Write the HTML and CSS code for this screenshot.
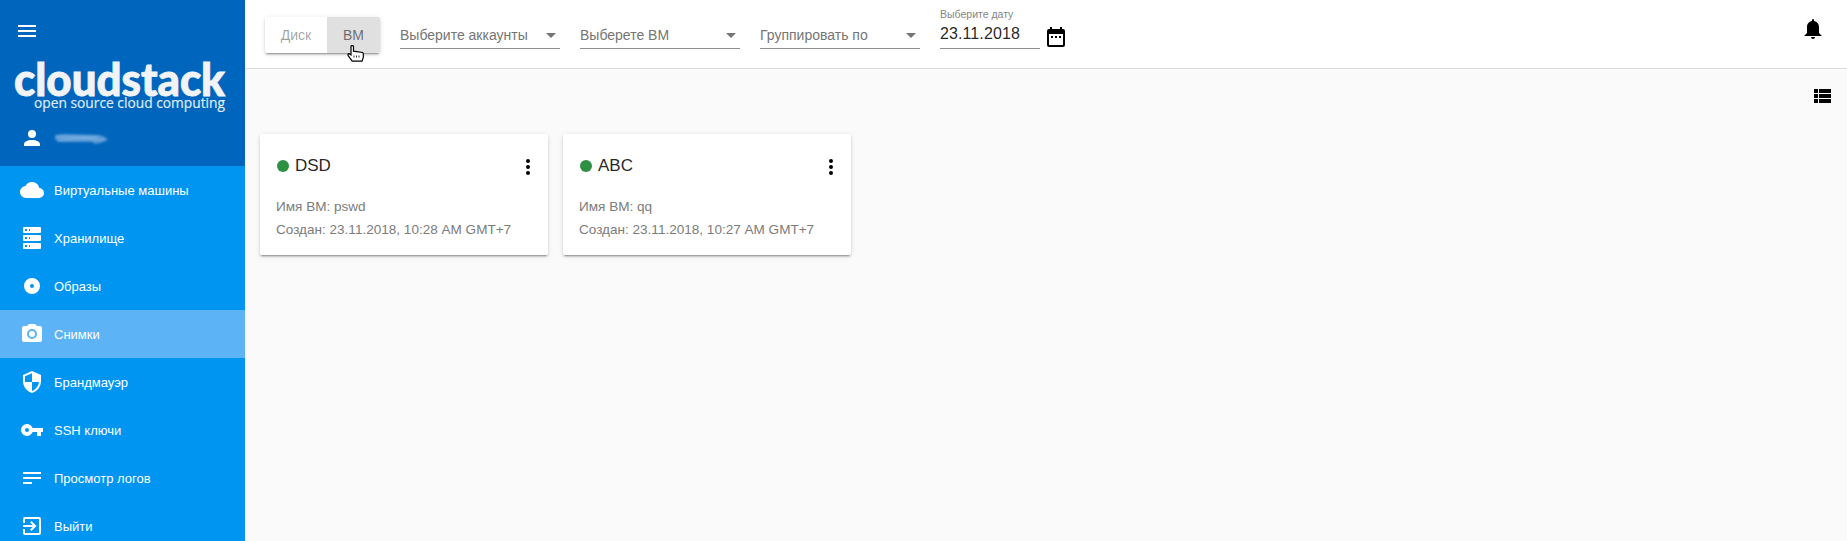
FILE: index.html
```html
<!DOCTYPE html>
<html lang="ru">
<head>
<meta charset="utf-8">
<title>CloudStack</title>
<link rel="stylesheet" href="styles.css">
</head>
<body>
<div class="app">
  <aside class="sidebar">
    <header class="sidebar-head">
      <svg class="icon burger" viewBox="0 0 24 24"><path d="M3 6h18v2H3V6m0 5h18v2H3v-2m0 5h18v2H3v-2z"/></svg>
      <svg class="logo" viewBox="0 0 245 56">
        <text class="logo-name" x="14" y="39.500" textLength="211" lengthAdjust="spacingAndGlyphs">cloudstack</text>
        <text class="logo-tag" x="34" y="52" textLength="191" lengthAdjust="spacingAndGlyphs">open source cloud computing</text>
      </svg>
      <div class="user">
        <svg class="icon" viewBox="0 0 24 24"><path d="M12 4a4 4 0 0 1 4 4 4 4 0 0 1-4 4 4 4 0 0 1-4-4 4 4 0 0 1 4-4m0 10c4.42 0 8 1.79 8 4v2H4v-2c0-2.21 3.58-4 8-4z"/></svg>
        <svg class="user-name" viewBox="0 0 56 14"><path class="smear" d="M1 4L10 3 46 4 51 6 54 9 46 12 41 13 38 11 4 11 1 8z"/><path class="streak" d="M3 5.500L44 6M5 9L30 7.500 50 9"/></svg>
      </div>
    </header>
    <nav class="menu">
      <a class="item"><svg class="icon" viewBox="0 0 24 24"><path d="M19.35 10.03C18.67 6.59 15.64 4 12 4 9.11 4 6.6 5.64 5.35 8.03 2.34 8.36 0 10.9 0 14a6 6 0 0 0 6 6h13a5 5 0 0 0 5-5c0-2.64-2.05-4.78-4.65-4.97z"/></svg>Виртуальные машины</a>
      <a class="item"><svg class="icon" viewBox="0 0 24 24"><path d="M4 1h16a1 1 0 0 1 1 1v4a1 1 0 0 1-1 1H4a1 1 0 0 1-1-1V2a1 1 0 0 1 1-1m0 8h16a1 1 0 0 1 1 1v4a1 1 0 0 1-1 1H4a1 1 0 0 1-1-1v-4a1 1 0 0 1 1-1m0 8h16a1 1 0 0 1 1 1v4a1 1 0 0 1-1 1H4a1 1 0 0 1-1-1v-4a1 1 0 0 1 1-1M9 5h1V3H9v2m0 8h1v-2H9v2m0 8h1v-2H9v2M5 3v2h2V3H5m0 8v2h2v-2H5m0 8v2h2v-2H5z"/></svg>Хранилище</a>
      <a class="item"><svg class="icon disc" viewBox="0 0 24 24"><path d="M12 10a2 2 0 0 0-2 2 2 2 0 0 0 2 2 2 2 0 0 0 2-2 2 2 0 0 0-2-2m0-6a8 8 0 0 0-8 8 8 8 0 0 0 8 8 8 8 0 0 0 8-8 8 8 0 0 0-8-8z"/></svg>Образы</a>
      <a class="item active"><svg class="icon" viewBox="0 0 24 24"><path d="M4 4h3l2-2h6l2 2h3a2 2 0 0 1 2 2v12a2 2 0 0 1-2 2H4a2 2 0 0 1-2-2V6a2 2 0 0 1 2-2m8 3a5 5 0 0 0-5 5 5 5 0 0 0 5 5 5 5 0 0 0 5-5 5 5 0 0 0-5-5m0 2a3 3 0 0 1 3 3 3 3 0 0 1-3 3 3 3 0 0 1-3-3 3 3 0 0 1 3-3z"/></svg>Снимки</a>
      <a class="item"><svg class="icon" viewBox="0 0 24 24"><path d="M12 12h7c-.53 4.11-3.28 7.78-7 8.92V12H5V6.3l7-3.11M12 1L3 5v6c0 5.55 3.84 10.73 9 12 5.16-1.27 9-6.45 9-12V5l-9-4z"/></svg>Брандмауэр</a>
      <a class="item"><svg class="icon" viewBox="0 0 24 24"><path d="M7 14a2 2 0 0 1-2-2 2 2 0 0 1 2-2 2 2 0 0 1 2 2 2 2 0 0 1-2 2m5.65-4C11.83 7.67 9.61 6 7 6a6 6 0 0 0-6 6 6 6 0 0 0 6 6c2.61 0 4.83-1.67 5.65-4H17v4h4v-4h2v-4H12.65z"/></svg>SSH ключи</a>
      <a class="item"><svg class="icon" viewBox="0 0 24 24"><path d="M3 6h18v2H3V6m0 5h18v2H3v-2m0 5h9v2H3v-2z"/></svg>Просмотр логов</a>
      <a class="item"><svg class="icon" viewBox="0 0 24 24"><path d="M19 3H5a2 2 0 0 0-2 2v4h2V5h14v14H5v-4H3v4a2 2 0 0 0 2 2h14a2 2 0 0 0 2-2V5a2 2 0 0 0-2-2m-8.92 12.58L11.5 17l5-5-5-5-1.42 1.41L12.67 11H3v2h9.67l-2.59 2.58z"/></svg>Выйти</a>
    </nav>
  </aside>
  <main class="main">
    <header class="topbar">
      <div class="toggle">
        <span class="toggle-btn">Диск</span>
        <span class="toggle-btn checked">ВМ</span>
        <svg class="cursor" viewBox="0 0 17 17"><path d="M4 1.5C4 .2 6.500.2 6.500 1.500V6.200l9 1.300c.6.300.8.800.8 1.300v3.700l-1.300 3.700H5.200L1.500 11.200c-.8-1.300-.8-2.500.5-2.500l2 1.300z"/><path class="knuckles" d="M7 10.500v2M9.500 10.500v2M12 10.500v2"/></svg>
      </div>
      <div class="select"><span>Выберите аккаунты</span><i class="caret"></i></div>
      <div class="select"><span>Выберете ВМ</span><i class="caret"></i></div>
      <div class="select"><span>Группировать по</span><i class="caret"></i></div>
      <div class="date">
        <label class="date-label">Выберите дату</label>
        <span class="date-value">23.11.2018</span>
      </div>
      <svg class="icon calendar" viewBox="0 0 24 24"><path d="M9 10v2H7v-2h2m4 0v2h-2v-2h2m4 0v2h-2v-2h2m2-7a2 2 0 0 1 2 2v14a2 2 0 0 1-2 2H5a2 2 0 0 1-2-2V5a2 2 0 0 1 2-2h1V1h2v2h8V1h2v2h1m0 16V8H5v11h14z"/></svg>
      <svg class="icon bell" viewBox="0 0 24 24"><path d="M14 20a2 2 0 0 1-2 2 2 2 0 0 1-2-2h4M12 2a1 1 0 0 1 1 1v1.080c2.840.480 5 2.940 5 5.920v6l3 3H3l3-3v-6c0-2.980 2.160-5.440 5-5.920V3a1 1 0 0 1 1-1z"/></svg>
    </header>
    <div class="viewbar">
      <svg class="icon" viewBox="0 0 24 24"><path d="M9 5v4h12V5M9 19h12v-4H9m0-1h12v-4H9M4 9h4V5H4m0 14h4v-4H4m0-1h4v-4H4v4z"/></svg>
    </div>
    <section class="cards">
      <article class="card">
        <div class="card-head"><i class="dot"></i><h3 class="card-title">DSD</h3><svg class="icon" viewBox="0 0 24 24"><path d="M12 16a2 2 0 1 1 0 4 2 2 0 0 1 0-4m0-6a2 2 0 1 1 0 4 2 2 0 0 1 0-4m0-6a2 2 0 1 1 0 4 2 2 0 0 1 0-4z"/></svg></div>
        <p class="line">Имя ВМ: pswd</p>
        <p class="line">Создан: 23.11.2018, 10:28 AM GMT+7</p>
      </article>
      <article class="card">
        <div class="card-head"><i class="dot"></i><h3 class="card-title">ABC</h3><svg class="icon" viewBox="0 0 24 24"><path d="M12 16a2 2 0 1 1 0 4 2 2 0 0 1 0-4m0-6a2 2 0 1 1 0 4 2 2 0 0 1 0-4m0-6a2 2 0 1 1 0 4 2 2 0 0 1 0-4z"/></svg></div>
        <p class="line">Имя ВМ: qq</p>
        <p class="line">Создан: 23.11.2018, 10:27 AM GMT+7</p>
      </article>
    </section>
  </main>
</div>
</body>
</html>
```
FILE: styles.css
```css
* { box-sizing: border-box; }
body { margin: 0; font-family: "Liberation Sans", Arial, sans-serif; font-size: 14px; color: rgba(0,0,0,.87); overflow: hidden; }
.app { display: flex; height: 541px; overflow: hidden; background: #fafafa; }
.icon { width: 24px; height: 24px; flex: none; fill: currentColor; display: block; }

.sidebar { width: 245px; flex: none; background: #0095f0; color: #fff; overflow: hidden; }
.sidebar-head { height: 166px; background: #0066bd; padding-top: 19px; }
.burger { margin-left: 15px; }
.logo { display: block; width: 245px; height: 56px; margin-top: 13px; overflow: visible; }
.logo-name { font: 900 46px Lato, sans-serif; fill: #f2f3f5; stroke: #f2f3f5; stroke-width: .9; }
.logo-tag { font: 400 14px "Open Sans", sans-serif; fill: #dfebf7; stroke: #dfebf7; stroke-width: .2; }
.user { display: flex; align-items: center; gap: 10px; padding-left: 20px; margin-top: 14px; }
.user-name { width: 56px; height: 14px; filter: blur(.8px); }
.smear { fill: #5597d5; }
.streak { fill: none; stroke: #8fbfe8; stroke-width: 1.2; }
.disc { fill-rule: evenodd; }
.item { display: flex; align-items: center; gap: 10px; height: 48px; padding-left: 20px; font-size: 13px; color: #fff; }
.item.active { background: #5cb3f5; }

.main { flex: 1; min-width: 0; }
.topbar { display: flex; align-items: flex-start; height: 69px; padding-left: 20px; background: #fff; border-bottom: 1px solid #dcdcdc; }
.toggle { position: relative; display: flex; height: 36px; margin: 17px 20px 0 0; border-radius: 2px; box-shadow: 0 3px 1px -2px rgba(0,0,0,.2), 0 2px 2px rgba(0,0,0,.14), 0 1px 5px rgba(0,0,0,.12); }
.toggle-btn { width: 62px; line-height: 36px; text-align: center; color: rgba(0,0,0,.38); }
.toggle-btn.checked { width: 53px; background: #e0e0e0; color: rgba(0,0,0,.54); border-radius: 0 2px 2px 0; }
.cursor { position: absolute; left: 82px; top: 28px; width: 17px; height: 17px; fill: #fff; stroke: #000; stroke-width: 1.2; }
.knuckles { fill: none; stroke-width: .8; }
.select { display: flex; align-items: center; justify-content: space-between; width: 160px; height: 27px; margin: 22px 20px 0 0; padding-right: 4px; border-bottom: 1px solid #8f8f8f; color: #757575; }
.caret { border: 5px solid transparent; border-top-color: #757575; border-bottom: 0; }
.date { display: flex; flex-direction: column; width: 100px; height: 42px; margin-top: 7px; border-bottom: 1px solid #8f8f8f; }
.date-label { font-size: 10.5px; line-height: 14px; color: #858585; }
.date-value { font-size: 16px; line-height: 26px; letter-spacing: .1px; }
.calendar { margin: 26px 0 0 4px; color: #000; }
.bell { margin: 17px 22px 0 auto; color: #000; }
.viewbar { display: flex; justify-content: flex-end; padding: 15px 13px 0 0; height: 65px; color: #000; }
.cards { display: flex; gap: 15px; padding-left: 15px; }
.card { width: 288px; height: 121px; padding: 15px 16px; background: #fff; border-radius: 2px; box-shadow: 0 3px 1px -2px rgba(0,0,0,.2), 0 2px 2px rgba(0,0,0,.14), 0 1px 5px rgba(0,0,0,.12); }
.card-head { display: flex; align-items: center; height: 32px; margin-bottom: 14px; }
.card-head .icon { margin: 4px -8px 0 auto; color: #000; }
.dot { width: 12px; height: 12px; margin: 1px 6px 0 1px; border-radius: 50%; background: #2e9043; }
.card-title { margin: 1px 0 0; font-size: 17px; font-weight: 400; }
.line { margin: 0; font-size: 13.55px; line-height: 23px; color: #7c7c7c; }
```
